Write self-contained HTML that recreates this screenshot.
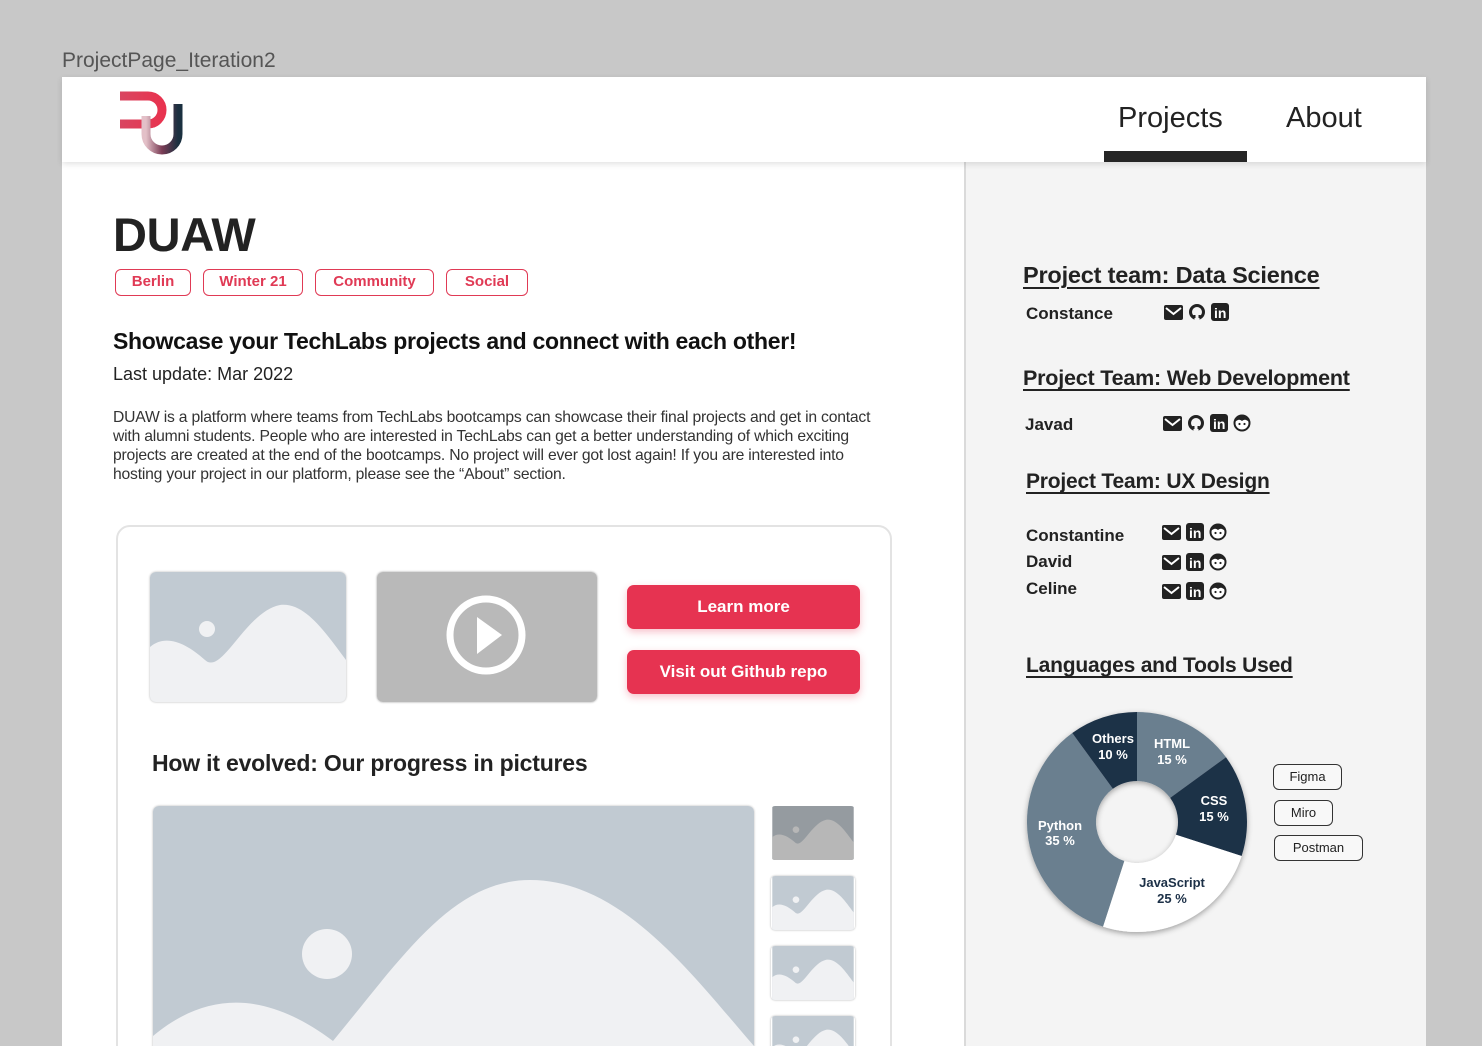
<!DOCTYPE html>
<html style="overflow:hidden;width:1482px;height:1046px"><head><meta charset="utf-8"><style>
*{margin:0;padding:0;box-sizing:border-box}
body{width:1482px;height:1046px;background:#c8c8c8;position:relative;overflow:hidden;font-family:"Liberation Sans",sans-serif;color:#222}
.a{position:absolute;white-space:nowrap}
.tag{position:absolute;top:269px;height:27px;border:1.5px solid #e03a55;border-radius:6px;color:#e03a55;font-size:15px;font-weight:bold;text-align:center;line-height:24px}
.btn{position:absolute;left:627px;width:233px;height:44px;background:#e63351;border-radius:7px;color:#fff;font-weight:bold;font-size:17px;text-align:center;line-height:44px;box-shadow:0 3px 8px rgba(230,51,81,.3)}
.h3{position:absolute;font-size:21.5px;font-weight:bold;text-decoration:underline;text-decoration-thickness:2px;text-underline-offset:4px;color:#222;white-space:nowrap;letter-spacing:-.2px}
.nm{position:absolute;font-size:17px;font-weight:bold;color:#222}
.ic{position:absolute;display:flex;gap:5px;align-items:center}
.tool{position:absolute;height:26px;border:1.5px solid #333;border-radius:6px;font-size:13px;text-align:center;line-height:23px;background:#f8f8f8}
</style></head><body>
<div class="a" style="left:62px;top:49px;font-size:21px;color:#555">ProjectPage_Iteration2</div>
<div class="a" style="left:62px;top:77px;width:1364px;height:969px;background:#fff"></div>
<div class="a" style="left:964px;top:162px;width:462px;height:884px;background:#f4f4f4;border-left:2px solid #dadada"></div>
<div class="a" style="left:62px;top:77px;width:1364px;height:85px;background:#fff;box-shadow:0 2px 6px rgba(0,0,0,.12)"></div>
<svg class="a" style="left:118px;top:88px" width="68" height="68" viewBox="0 0 68 68">
<defs><linearGradient id="g1" x1="0" x2="1"><stop offset="0" stop-color="#d94560"/><stop offset="1" stop-color="#e8334f"/></linearGradient>
<linearGradient id="g2" x1="0" x2="1"><stop offset="0" stop-color="#e3c0c8"/><stop offset=".5" stop-color="#7a3c55"/><stop offset="1" stop-color="#1b3040"/></linearGradient></defs>
<path d="M2 8 H30 A14 14 0 0 1 30 36 H2" stroke="url(#g1)" stroke-width="9" fill="none"/>
<path d="M28 28 V46 A14 14 0 0 0 60 46 V16" stroke="url(#g2)" stroke-width="9" fill="none"/>
</svg>
<div class="a" style="left:1118px;top:102px;font-size:29px;color:#222">Projects</div>
<div class="a" style="left:1286px;top:102px;font-size:29px;color:#222">About</div>
<div class="a" style="left:1104px;top:151px;width:143px;height:11px;background:#252525"></div>

<div class="a" style="left:113px;top:207px;font-size:47px;font-weight:bold;color:#222;letter-spacing:-.3px">DUAW</div>
<div class="tag" style="left:115px;width:76px">Berlin</div>
<div class="tag" style="left:203px;width:100px">Winter 21</div>
<div class="tag" style="left:315px;width:119px">Community</div>
<div class="tag" style="left:446px;width:82px">Social</div>
<div class="a" style="left:113px;top:328px;font-size:23px;font-weight:bold;color:#111;letter-spacing:-.3px">Showcase your TechLabs projects and connect with each other!</div>
<div class="a" style="left:113px;top:364px;font-size:18px;color:#222">Last update: Mar 2022</div>
<div class="a" style="left:113px;top:408px;font-size:15.7px;line-height:19px;color:#333;letter-spacing:-.2px">DUAW is a platform where teams from TechLabs bootcamps can showcase their final projects and get in contact<br>with alumni students. People who are interested in TechLabs can get a better understanding of which exciting<br>projects are created at the end of the bootcamps. No project will ever got lost again! If you are interested into<br>hosting your project in our platform, please see the “About” section.</div>

<div class="a" style="left:116px;top:525px;width:776px;height:560px;border:2px solid #e3e3e3;border-radius:14px;background:#fff"></div>
<svg class="a" style="left:150px;top:572px;border-radius:6px;box-shadow:0 0 2px rgba(0,0,0,.3)" width="196" height="130" viewBox="0 0 196 130"><rect width="196" height="130" fill="#c1cad2"/><path d="M0 75 C15 62 35 70 55 88 C72 104 95 40 130 33 C155 30 175 60 196 88 V130 H0Z" fill="#f0f1f3"/><circle cx="57" cy="57" r="8" fill="#f0f1f3"/></svg>
<svg class="a" style="left:377px;top:572px;border-radius:6px;box-shadow:0 0 2px rgba(0,0,0,.4)" width="220" height="130" viewBox="0 0 220 130"><rect width="220" height="130" fill="#b9b9b9"/><circle cx="109" cy="63" r="36" stroke="#fff" stroke-width="7" fill="none"/><path d="M100 45 L100 82 L125 63Z" fill="#fff"/></svg>
<div class="btn" style="top:585px">Learn more</div>
<div class="btn" style="top:650px">Visit out Github repo</div>
<div class="a" style="left:152px;top:750px;font-size:23px;font-weight:bold;color:#222;letter-spacing:-.2px">How it evolved: Our progress in pictures</div>
<svg class="a" style="left:153px;top:806px;border-radius:6px;box-shadow:0 0 2px rgba(0,0,0,.3)" width="601" height="260" viewBox="0 0 601 260"><rect width="601" height="260" fill="#c1cad2"/><path d="M0 230 C60 180 120 190 180 235 C250 150 300 74 377 74 C470 74 540 170 601 240 V260 H0Z" fill="#f0f1f3"/><circle cx="174" cy="148" r="25" fill="#f0f1f3"/></svg>
<svg class="a" style="left:771px;top:806px;border-radius:4px" width="84" height="54" viewBox="0 0 196 130"><rect width="196" height="130" fill="#959ba0"/><path d="M0 75 C15 62 35 70 55 88 C72 104 95 40 130 33 C155 30 175 60 196 88 V130 H0Z" fill="#b7b7b7"/><circle cx="57" cy="57" r="8" fill="#b7b7b7"/></svg>
<svg class="a" style="left:771px;top:876px;border-radius:4px;box-shadow:0 0 2px rgba(0,0,0,.3)" width="84" height="54" viewBox="0 0 196 130"><rect width="196" height="130" fill="#c1cad2"/><path d="M0 75 C15 62 35 70 55 88 C72 104 95 40 130 33 C155 30 175 60 196 88 V130 H0Z" fill="#f0f1f3"/><circle cx="57" cy="57" r="8" fill="#f0f1f3"/></svg>
<svg class="a" style="left:771px;top:946px;border-radius:4px;box-shadow:0 0 2px rgba(0,0,0,.3)" width="84" height="54" viewBox="0 0 196 130"><rect width="196" height="130" fill="#c1cad2"/><path d="M0 75 C15 62 35 70 55 88 C72 104 95 40 130 33 C155 30 175 60 196 88 V130 H0Z" fill="#f0f1f3"/><circle cx="57" cy="57" r="8" fill="#f0f1f3"/></svg>
<svg class="a" style="left:771px;top:1016px;border-radius:4px;box-shadow:0 0 2px rgba(0,0,0,.3)" width="84" height="54" viewBox="0 0 196 130"><rect width="196" height="130" fill="#c1cad2"/><path d="M0 75 C15 62 35 70 55 88 C72 104 95 40 130 33 C155 30 175 60 196 88 V130 H0Z" fill="#f0f1f3"/><circle cx="57" cy="57" r="8" fill="#f0f1f3"/></svg>

<div class="h3" style="left:1023px;top:262px;font-size:23.5px">Project team: Data Science</div>
<div class="nm" style="left:1026px;top:304px">Constance</div>
<div class="ic" style="left:1164px;top:303px">
<svg width="19" height="15"><rect width="19" height="15" rx="2" fill="#222"/><path d="M2 3 L9.5 9 L17 3" stroke="#fff" stroke-width="2" fill="none"/></svg>
<svg width="18" height="18"><circle cx="9" cy="9" r="6.5" stroke="#222" stroke-width="3" fill="none"/><rect x="6.5" y="13" width="5" height="5" fill="#f4f4f4"/><path d="M6.5 15 V12 M11.5 15 V12" stroke="#222" stroke-width="2"/></svg>
<svg width="18" height="18"><rect width="18" height="18" rx="3" fill="#222"/><text x="3" y="15" font-family="Liberation Sans" font-weight="bold" font-size="14" fill="#fff">in</text></svg>
</div>
<div class="h3" style="left:1023px;top:366px">Project Team: Web Development</div>
<div class="nm" style="left:1025px;top:415px">Javad</div>
<div class="ic" style="left:1163px;top:414px">
<svg width="19" height="15"><rect width="19" height="15" rx="2" fill="#222"/><path d="M2 3 L9.5 9 L17 3" stroke="#fff" stroke-width="2" fill="none"/></svg>
<svg width="18" height="18"><circle cx="9" cy="9" r="6.5" stroke="#222" stroke-width="3" fill="none"/><rect x="6.5" y="13" width="5" height="5" fill="#f4f4f4"/><path d="M6.5 15 V12 M11.5 15 V12" stroke="#222" stroke-width="2"/></svg>
<svg width="18" height="18"><rect width="18" height="18" rx="3" fill="#222"/><text x="3" y="15" font-family="Liberation Sans" font-weight="bold" font-size="14" fill="#fff">in</text></svg>
<svg width="18" height="18"><circle cx="9" cy="9" r="7.5" stroke="#222" stroke-width="2" fill="#fff"/><path d="M2 8 A7 7 0 0 1 16 8 Q12 4 9 7 Q6 4 2 8Z" fill="#222"/><circle cx="6.5" cy="10" r="1.1" fill="#222"/><circle cx="11.5" cy="10" r="1.1" fill="#222"/></svg>
</div>
<div class="h3" style="left:1026px;top:470px;font-size:21px">Project Team: UX Design</div>
<div class="nm" style="left:1026px;top:526px">Constantine</div>
<div class="nm" style="left:1026px;top:552px">David</div>
<div class="nm" style="left:1026px;top:579px">Celine</div>
<div class="ic" style="left:1162px;top:523px">
<svg width="19" height="15"><rect width="19" height="15" rx="2" fill="#222"/><path d="M2 3 L9.5 9 L17 3" stroke="#fff" stroke-width="2" fill="none"/></svg>
<svg width="18" height="18"><rect width="18" height="18" rx="3" fill="#222"/><text x="3" y="15" font-family="Liberation Sans" font-weight="bold" font-size="14" fill="#fff">in</text></svg>
<svg width="18" height="18"><circle cx="9" cy="9" r="7.5" stroke="#222" stroke-width="2" fill="#fff"/><path d="M2 8 A7 7 0 0 1 16 8 Q12 4 9 7 Q6 4 2 8Z" fill="#222"/><circle cx="6.5" cy="10" r="1.1" fill="#222"/><circle cx="11.5" cy="10" r="1.1" fill="#222"/></svg>
</div>
<div class="ic" style="left:1162px;top:553px">
<svg width="19" height="15"><rect width="19" height="15" rx="2" fill="#222"/><path d="M2 3 L9.5 9 L17 3" stroke="#fff" stroke-width="2" fill="none"/></svg>
<svg width="18" height="18"><rect width="18" height="18" rx="3" fill="#222"/><text x="3" y="15" font-family="Liberation Sans" font-weight="bold" font-size="14" fill="#fff">in</text></svg>
<svg width="18" height="18"><circle cx="9" cy="9" r="7.5" stroke="#222" stroke-width="2" fill="#fff"/><path d="M2 8 A7 7 0 0 1 16 8 Q12 4 9 7 Q6 4 2 8Z" fill="#222"/><circle cx="6.5" cy="10" r="1.1" fill="#222"/><circle cx="11.5" cy="10" r="1.1" fill="#222"/></svg>
</div>
<div class="ic" style="left:1162px;top:582px">
<svg width="19" height="15"><rect width="19" height="15" rx="2" fill="#222"/><path d="M2 3 L9.5 9 L17 3" stroke="#fff" stroke-width="2" fill="none"/></svg>
<svg width="18" height="18"><rect width="18" height="18" rx="3" fill="#222"/><text x="3" y="15" font-family="Liberation Sans" font-weight="bold" font-size="14" fill="#fff">in</text></svg>
<svg width="18" height="18"><circle cx="9" cy="9" r="7.5" stroke="#222" stroke-width="2" fill="#fff"/><path d="M2 8 A7 7 0 0 1 16 8 Q12 4 9 7 Q6 4 2 8Z" fill="#222"/><circle cx="6.5" cy="10" r="1.1" fill="#222"/><circle cx="11.5" cy="10" r="1.1" fill="#222"/></svg>
</div>
<div class="h3" style="left:1026px;top:654px;font-size:21px">Languages and Tools Used</div>

<svg class="a" style="left:1010px;top:700px" width="250" height="250" viewBox="1010 700 250 250">
<defs><filter id="sh" x="-20%" y="-20%" width="140%" height="140%"><feDropShadow dx="0" dy="2" stdDeviation="3" flood-opacity=".35"/></filter></defs>
<g filter="url(#sh)">
<path d="M1137 712 A110 110 0 0 1 1226 757.3 L1170.2 797.9 A41 41 0 0 0 1137 781Z" fill="#6a7f8f"/>
<path d="M1226 757.3 A110 110 0 0 1 1241.6 856 L1176 834.7 A41 41 0 0 0 1170.2 797.9Z" fill="#1c3047"/>
<path d="M1241.6 856 A110 110 0 0 1 1103 926.6 L1124.3 861 A41 41 0 0 0 1176 834.7Z" fill="#fff"/>
<path d="M1103 926.6 A110 110 0 0 1 1072.3 733 L1112.9 788.8 A41 41 0 0 0 1124.3 861Z" fill="#6a7f8f"/>
<path d="M1072.3 733 A110 110 0 0 1 1137 712 L1137 781 A41 41 0 0 0 1112.9 788.8Z" fill="#1c3047"/>
</g>
<g font-family="Liberation Sans" font-weight="bold" font-size="13" text-anchor="middle">
<text x="1113" y="743" fill="#fff">Others</text><text x="1113" y="759" fill="#fff">10 %</text>
<text x="1172" y="748" fill="#fff">HTML</text><text x="1172" y="764" fill="#fff">15 %</text>
<text x="1214" y="805" fill="#fff">CSS</text><text x="1214" y="821" fill="#fff">15 %</text>
<text x="1172" y="887" fill="#1c3047">JavaScript</text><text x="1172" y="903" fill="#1c3047">25 %</text>
<text x="1060" y="830" fill="#fff">Python</text><text x="1060" y="845" fill="#fff">35 %</text>
</g>
</svg>
<div class="tool" style="left:1273px;top:764px;width:69px">Figma</div>
<div class="tool" style="left:1274px;top:800px;width:59px">Miro</div>
<div class="tool" style="left:1274px;top:835px;width:89px">Postman</div>
</body></html>
